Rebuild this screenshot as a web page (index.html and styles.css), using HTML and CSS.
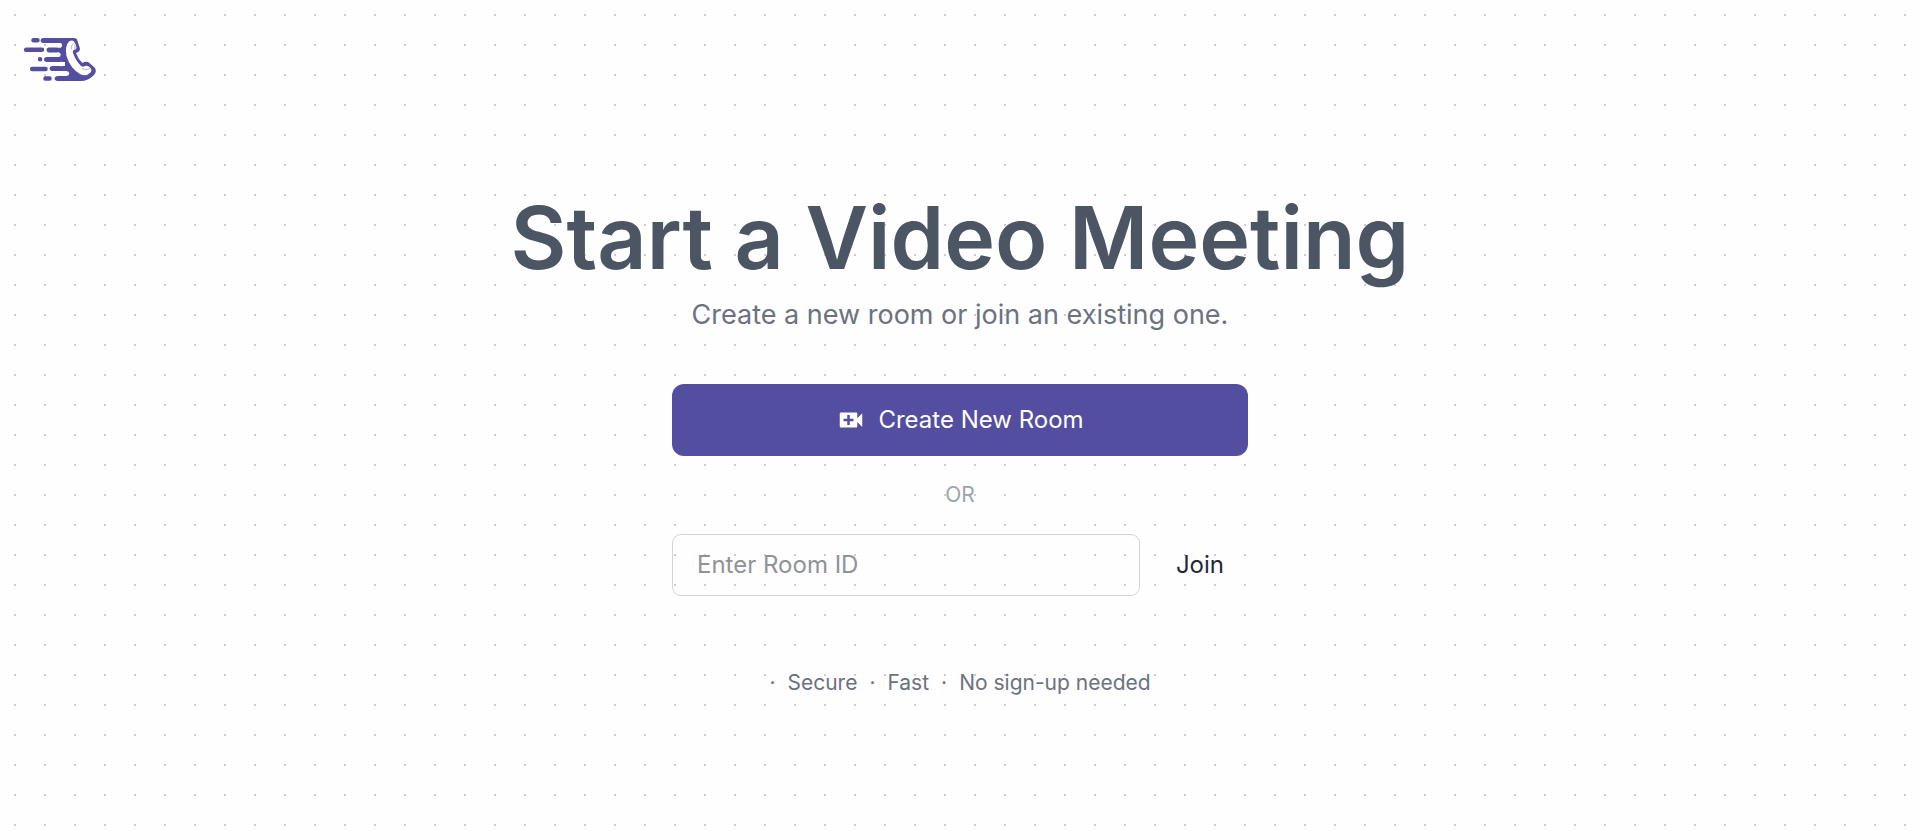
FILE: index.html
```html
<!DOCTYPE html>
<html lang="en">
<head>
  <meta charset="utf-8">
  <meta name="viewport" content="width=device-width, initial-scale=1">
  <title>Start a Video Meeting</title>
  <link rel="stylesheet" href="styles.css">
</head>
<body>
  <header class="header">
    <a class="logo" href="#" aria-label="Home">
      <svg class="logo-icon" viewBox="0 0 72 45" fill="none" aria-hidden="true">
        <path class="logo-body" d="M19 1H50Q53 1 53.500 4L56 11.500Q56 15 52 16Q54 22 58.500 26Q62 23.500 65.500 26L71 31Q73 35 70 38Q64 44 57 44H33Q30.500 43 30.500 41.500Q31 39 34 39H43V34H28Q25.500 33.500 25.500 31.500Q26 29 28 29H41V25H23Q20 24.500 20 22.500Q20 20 23 20H35V15.500H25Q22.500 15 22.500 13Q22.500 10.500 25 10.500H37V6H19Q16.500 5.500 16.500 3.500Q17 1 19 1Z"/>
        <path class="logo-streak" d="M9.500 3.300H13.500M2.200 12.800H18M16 22.300H16.100M8.200 32H21.500M21.500 41.500H25.500"/>
        <path class="logo-gap" d="M34 8.300H36M34 17.800H34.500M37 27.100H38M42 36.400H43"/>
        <path class="logo-phone" d="M45 4.500Q48 2.500 50 4.500Q52.500 8 52.500 11Q52 13 49.500 13Q48.500 14 49 16Q52 24 57 29Q59 30.500 61 29Q64 28 66 30.500Q68.500 33 66.500 35.500Q62 40 56 37Q46 31 42.500 19Q40.500 9 45 4.500Z"/>
        <path class="logo-detail" d="M47.500 12Q47 8 49.500 6.500M51 7V12M58 31.500Q62 34 66 31.500"/>
      </svg>
    </a>
  </header>

  <main class="hero">
    <h1 class="title">Start a Video Meeting</h1>
    <p class="subtitle">Create a new room or join an existing one.</p>

    <div class="actions">
      <button class="create-button" type="button">
        <svg class="video-icon" viewBox="0 0 24 24" fill="currentColor" aria-hidden="true">
          <path d="M17 10.500V7c0-.55-.45-1-1-1H4c-.55 0-1 .45-1 1v10c0 .55.45 1 1 1h12c.55 0 1-.45 1-1v-3.500l4 4v-11l-4 4zM14 13h-3v3H9v-3H6v-2h3V8h2v3h3v2z"/>
        </svg>
        Create New Room
      </button>
      <p class="divider">OR</p>
      <form class="join-form">
        <input class="room-input" type="text" name="room" placeholder="Enter Room ID" aria-label="Room ID">
        <button class="join-button" type="button">Join</button>
      </form>
    </div>

    <ul class="features">
      <li>Secure</li>
      <li>Fast</li>
      <li>No sign-up needed</li>
    </ul>
  </main>
</body>
</html>
```
FILE: styles.css
```css
* {
  box-sizing: border-box;
}

body {
  display: flex;
  flex-direction: column;
  min-height: 100vh;
  margin: 0;
  background-color: #fefefe;
  background-image: radial-gradient(#ccc 1px, transparent 1px);
  background-size: 30px 30px;
  color: #1f2937;
  font-family: Inter, "Liberation Sans", sans-serif;
}

.header {
  display: flex;
  padding: 37px 24px 0;
}

.logo,
.logo-icon {
  display: block;
}

.logo-icon {
  width: 72px;
  height: 45px;
}

.logo-body {
  fill: #544ea0;
}

.logo-streak {
  stroke: #544ea0;
  stroke-width: 4.500;
  stroke-linecap: round;
}

.logo-gap {
  stroke: #fefefe;
  stroke-width: 4.500;
  stroke-linecap: round;
}

.logo-phone {
  fill: #fefefe;
}

.logo-detail {
  stroke: #b3b0d8;
  stroke-width: 1;
}

.hero {
  display: flex;
  flex-direction: column;
  align-items: center;
  padding: 102px 24px 24px;
  text-align: center;
}

.title {
  margin: 0;
  color: #4b5563;
  font-size: 86px;
  font-weight: 600;
  line-height: 108px;
}

.subtitle {
  margin: 5px 0 51px;
  color: #6b7280;
  font-size: 27px;
  line-height: 36px;
}

.actions {
  width: 100%;
  max-width: 576px;
}

.create-button {
  display: flex;
  align-items: center;
  justify-content: center;
  gap: 12px;
  width: 100%;
  padding: 18px 24px;
  border: 0;
  border-radius: 12px;
  background: #544ea0;
  color: #fff;
  font: 400 24px/36px Inter, "Liberation Sans", sans-serif;
}

.video-icon {
  width: 30px;
  height: 30px;
}

.divider {
  margin: 24px 0;
  color: #9ca3af;
  font-size: 21px;
  line-height: 30px;
}

.join-form {
  display: flex;
  gap: 12px;
}

.room-input {
  flex: 1;
  min-width: 0;
  padding: 12px 24px;
  border: 1px solid #d1d5db;
  border-radius: 9px;
  background: transparent;
  color: #1f2937;
  font: 400 24px/36px Inter, "Liberation Sans", sans-serif;
}

.room-input::placeholder {
  color: #8e9399;
}

.join-button {
  padding: 12px 24px;
  border: 0;
  background: transparent;
  color: #1f2937;
  font: 400 24px/36px Inter, "Liberation Sans", sans-serif;
}

.features {
  display: flex;
  gap: 12px;
  margin: 72px 0 0;
  padding: 0;
  color: #6b7280;
  font-size: 21px;
  line-height: 30px;
  list-style: none;
}

.features li {
  display: flex;
  gap: 12px;
}

.features li::before {
  content: "·";
}
```
